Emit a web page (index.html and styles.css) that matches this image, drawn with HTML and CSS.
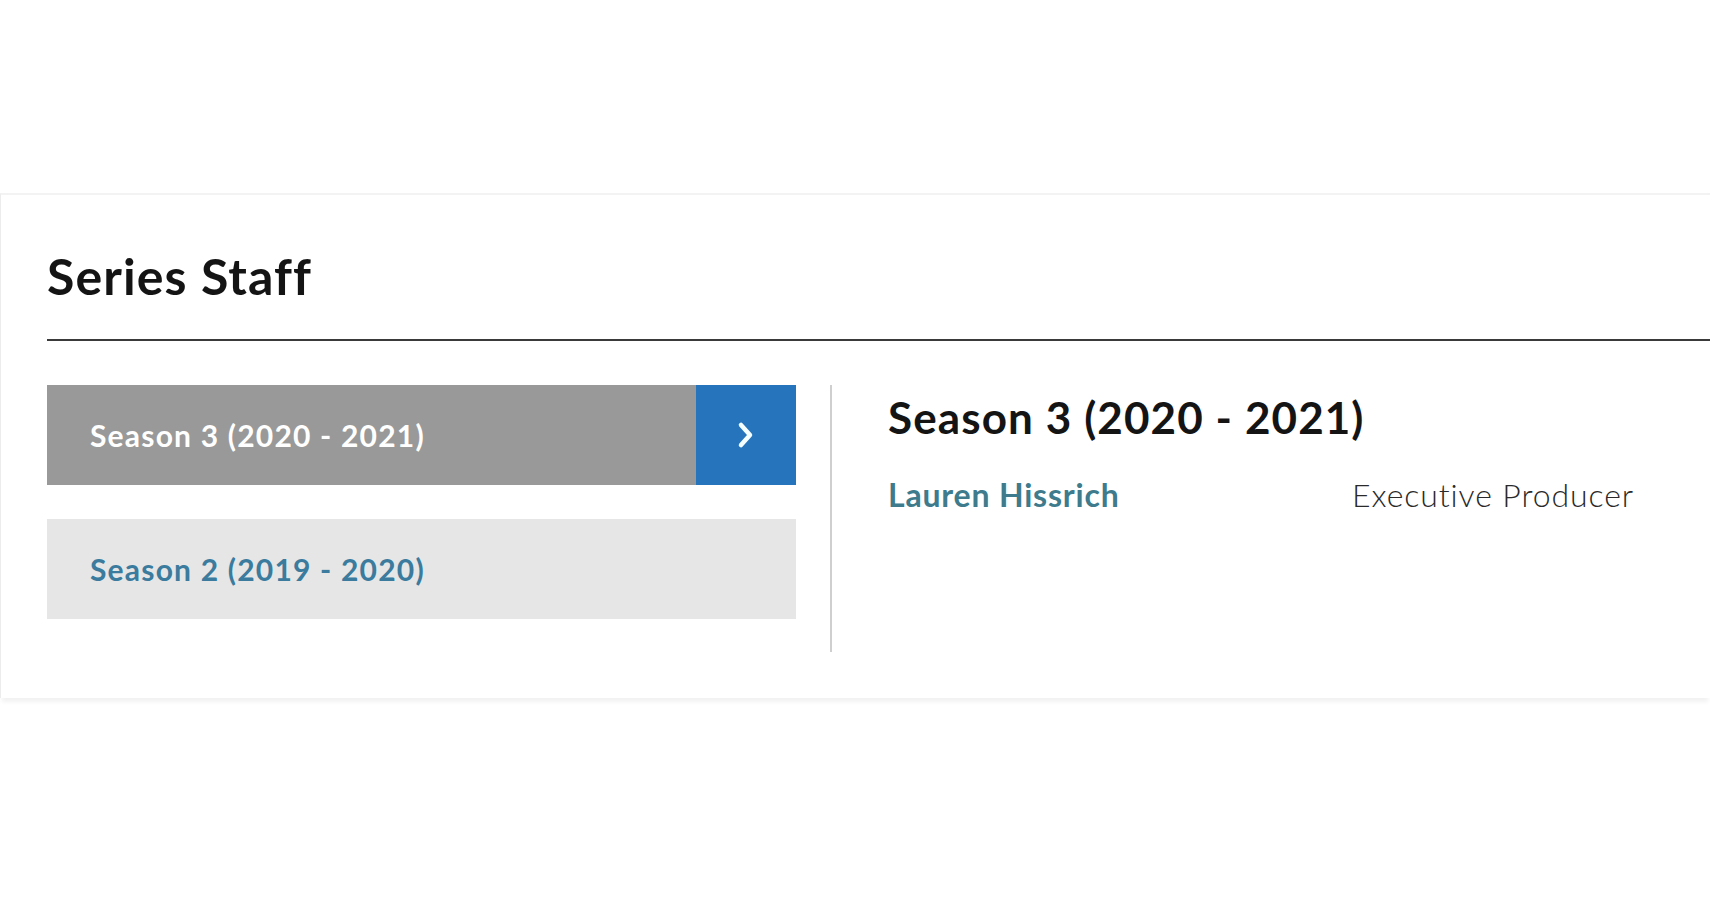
FILE: index.html
```html
<!DOCTYPE html>
<html lang="en">
<head>
<meta charset="utf-8">
<title>Series Staff</title>
<link rel="stylesheet" href="styles.css">
</head>
<body>
<div class="page">
  <section class="card">
    <h2 class="card-title">Series Staff</h2>
    <div class="rule"></div>
    <div class="staff">
      <nav class="seasons">
        <a class="season season-active" href="#">
          <span class="season-label">Season 3 (2020 - 2021)</span>
          <span class="season-arrow">
            <svg width="20" height="28" viewBox="0 0 20 28"><path d="M5 4 L14 14 L5 24" fill="none" stroke="#f4fdff" stroke-width="4.5" stroke-linecap="round" stroke-linejoin="round"/></svg>
          </span>
        </a>
        <a class="season" href="#">
          <span class="season-label">Season 2 (2019 - 2020)</span>
        </a>
      </nav>
      <div class="divider"></div>
      <div class="details">
        <h3 class="details-title">Season 3 (2020 - 2021)</h3>
        <div class="credit">
          <a class="credit-name" href="#">Lauren Hissrich</a>
          <span class="credit-role">Executive Producer</span>
        </div>
      </div>
    </div>
  </section>
</div>
</body>
</html>
```

FILE: styles.css
```css
html, body {
  margin: 0;
  padding: 0;
  background: #ffffff;
}

body {
  font-family: "Lato", "Open Sans", sans-serif;
  color: #1a1a1a;
}

.page {
  padding-top: 193px;
  width: 1710px;
  height: 900px;
  box-sizing: border-box;
  overflow: hidden;
}

.card {
  height: 505px;
  box-sizing: border-box;
  padding: 0 0 0 46px;
  background: #ffffff;
  border-left: 1px solid #ececec;
  border-top: 2px solid #f3f3f3;
  box-shadow: 0 6px 4px -2px #f2f2f2;
}

.card-title {
  margin: 0;
  padding-top: 53px;
  font-size: 50px;
  line-height: 56px;
  font-weight: 700;
  letter-spacing: 1.1px;
  color: #141414;
}

.rule {
  margin-top: 35px;
  height: 2px;
  background: #3a3a3a;
}

.staff {
  display: flex;
  margin-top: 44px;
}

.seasons {
  width: 749px;
  display: flex;
  flex-direction: column;
  gap: 34px;
}

.season {
  display: flex;
  height: 100px;
  align-items: center;
  text-decoration: none;
  background: #e6e6e6;
  color: #3a7b9e;
}

.season-active {
  background: #999999;
  color: #ffffff;
}

.season-label {
  flex: 1;
  padding-left: 43px;
  font-size: 30px;
  font-weight: 700;
  letter-spacing: 1.2px;
}

.season-arrow {
  width: 100px;
  height: 100px;
  display: flex;
  align-items: center;
  justify-content: center;
  background: #2574bc;
}

.divider {
  width: 2px;
  height: 267px;
  margin-left: 34px;
  background: #cfcfcf;
}

.details {
  padding-left: 56px;
  flex: 1;
}

.details-title {
  margin: 0;
  padding-top: 6px;
  font-size: 44px;
  line-height: 52px;
  font-weight: 700;
  letter-spacing: 1.1px;
  color: #141414;
}

.credit {
  display: flex;
  margin-top: 32px;
  font-size: 32px;
  line-height: 40px;
}

.credit-name {
  width: 464px;
  font-weight: 700;
  letter-spacing: 0.8px;
  color: #3e7b8c;
  text-decoration: none;
}

.credit-role {
  font-weight: 300;
  letter-spacing: 0.9px;
  color: #2a2a2a;
}
```
